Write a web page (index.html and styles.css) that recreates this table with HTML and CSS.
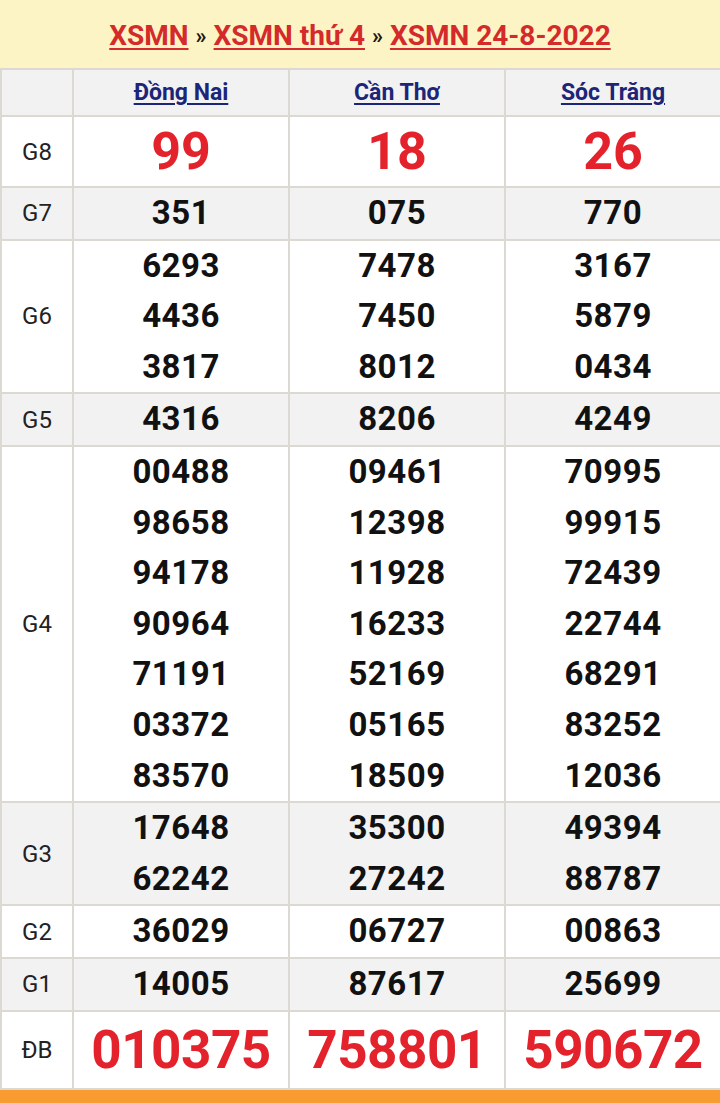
FILE: index.html
```html
<!DOCTYPE html>
<html lang="vi">
<head>
<meta charset="utf-8">
<title>XSMN 24-8-2022</title>
<link rel="stylesheet" href="styles.css">
</head>
<body>
<div class="page">
  <div class="title">
    <a class="crumb" href="#">XSMN</a> <span class="sep">»</span> <a class="crumb" href="#">XSMN thứ 4</a> <span class="sep">»</span> <a class="crumb" href="#">XSMN 24-8-2022</a>
  </div>
  <table class="results">
    <colgroup>
      <col class="c-label"><col class="c-prov"><col class="c-prov"><col class="c-prov">
    </colgroup>
    <tr class="row-head shade">
      <td></td>
      <td><a class="prov" href="#">Đồng Nai</a></td>
      <td><a class="prov" href="#">Cần Thơ</a></td>
      <td><a class="prov" href="#">Sóc Trăng</a></td>
    </tr>
    <tr class="row-g8">
      <td class="label">G8</td>
      <td class="big">99</td><td class="big">18</td><td class="big">26</td>
    </tr>
    <tr class="shade">
      <td class="label">G7</td>
      <td class="num"><div>351</div></td><td class="num"><div>075</div></td><td class="num"><div>770</div></td>
    </tr>
    <tr>
      <td class="label">G6</td>
      <td class="num"><div>6293</div><div>4436</div><div>3817</div></td>
      <td class="num"><div>7478</div><div>7450</div><div>8012</div></td>
      <td class="num"><div>3167</div><div>5879</div><div>0434</div></td>
    </tr>
    <tr class="shade">
      <td class="label">G5</td>
      <td class="num"><div>4316</div></td><td class="num"><div>8206</div></td><td class="num"><div>4249</div></td>
    </tr>
    <tr>
      <td class="label">G4</td>
      <td class="num"><div>00488</div><div>98658</div><div>94178</div><div>90964</div><div>71191</div><div>03372</div><div>83570</div></td>
      <td class="num"><div>09461</div><div>12398</div><div>11928</div><div>16233</div><div>52169</div><div>05165</div><div>18509</div></td>
      <td class="num"><div>70995</div><div>99915</div><div>72439</div><div>22744</div><div>68291</div><div>83252</div><div>12036</div></td>
    </tr>
    <tr class="shade">
      <td class="label">G3</td>
      <td class="num"><div>17648</div><div>62242</div></td>
      <td class="num"><div>35300</div><div>27242</div></td>
      <td class="num"><div>49394</div><div>88787</div></td>
    </tr>
    <tr>
      <td class="label">G2</td>
      <td class="num"><div>36029</div></td><td class="num"><div>06727</div></td><td class="num"><div>00863</div></td>
    </tr>
    <tr class="shade">
      <td class="label">G1</td>
      <td class="num"><div>14005</div></td><td class="num"><div>87617</div></td><td class="num"><div>25699</div></td>
    </tr>
    <tr class="row-db">
      <td class="label">ĐB</td>
      <td class="special">010375</td><td class="special">758801</td><td class="special">590672</td>
    </tr>
  </table>
  <div class="footer-bar"></div>
</div>
</body>
</html>
```

FILE: styles.css
```css
html, body {
  margin: 0;
  padding: 0;
  background: #ffffff;
}

.page {
  width: 720px;
  font-family: Roboto, "Noto Sans", "Liberation Sans", sans-serif;
  color: #111111;
}

.title {
  height: 68px;
  box-sizing: border-box;
  padding-top: 3px;
  background: #fdf4c6;
  display: flex;
  align-items: center;
  justify-content: center;
  gap: 7px;
  font-size: 28px;
  font-weight: 700;
}

.crumb {
  color: #d42a2a;
  text-decoration: underline;
  text-decoration-thickness: 2px;
  text-underline-offset: 3px;
}

.sep {
  color: #1a1a1a;
  font-weight: 700;
  font-size: 22px;
}

.results {
  width: 720px;
  border-collapse: collapse;
  table-layout: fixed;
}

.c-label { width: 72px; }
.c-prov { width: 216px; }

.results td {
  border: 2px solid #dcd8d2;
  padding: 0;
  text-align: center;
  vertical-align: middle;
}

.shade td {
  background: #f2f2f2;
}

.row-head td {
  height: 45px;
}

.prov {
  color: #1c2577;
  font-size: 23px;
  font-weight: 700;
  text-decoration: underline;
  text-decoration-thickness: 1.5px;
  text-underline-offset: 3px;
}

.label {
  font-size: 24px;
  color: #222222;
}

.num {
  font-size: 33px;
  font-weight: 700;
  line-height: 50.6px;
  letter-spacing: 0.5px;
  color: #111111;
}

.big {
  font-size: 52px;
  font-weight: 700;
  line-height: 69px;
  color: #e3222b;
}

.special {
  font-size: 53px;
  font-weight: 700;
  line-height: 76px;
  color: #e3222b;
  letter-spacing: -0.5px;
}

.footer-bar {
  height: 15px;
  background: #f89c32;
}
```
